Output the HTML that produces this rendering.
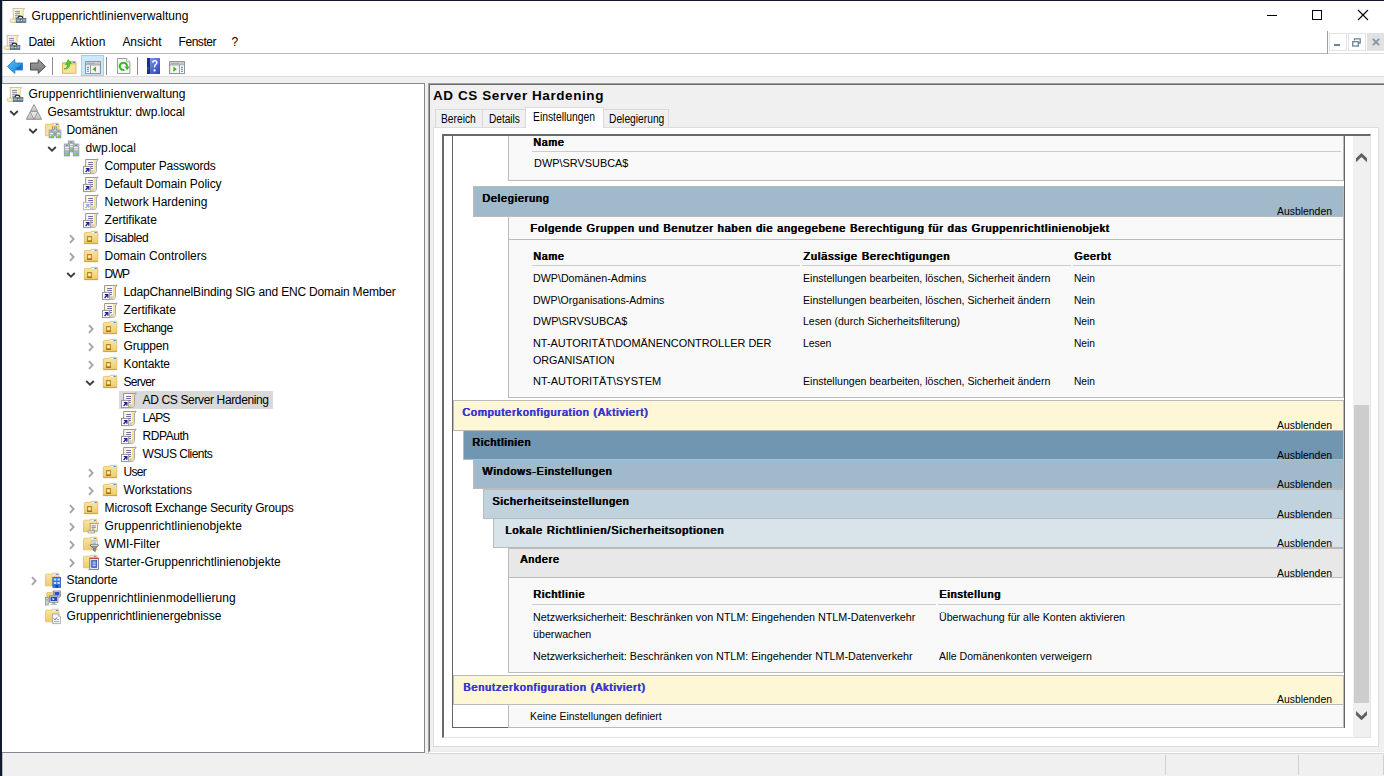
<!DOCTYPE html>
<html lang="de"><head><meta charset="utf-8"><title>Gruppenrichtlinienverwaltung</title>
<style>
html,body{margin:0;padding:0;}
body{width:1384px;height:776px;overflow:hidden;position:relative;background:#f0f0f0;font-family:"Liberation Sans", sans-serif;color:#000;}
div,span{position:absolute;white-space:pre;}
span{display:block;}
svg{display:block;overflow:visible;}
</style></head><body>
<div style="left:0px;top:0px;width:1384px;height:776px;background:#f0f0f0;"></div>
<div style="left:0px;top:0px;width:1384px;height:31px;background:#ffffff;"></div>
<div style="left:0px;top:31px;width:1384px;height:22px;background:#ffffff;"></div>
<div style="left:0px;top:53px;width:1328px;height:1px;background:#b9b9b9;"></div>
<div style="left:1328px;top:53px;width:56px;height:1px;background:#dcdcdc;"></div>
<div style="left:0px;top:54px;width:1384px;height:22px;background:#ffffff;"></div>
<div style="left:0px;top:76px;width:1384px;height:1px;background:#dedede;"></div>
<div style="left:0px;top:0px;width:1384px;height:1px;background:#101c2e;"></div>
<div style="left:0px;top:0px;width:2px;height:776px;background:#0f1a2c;"></div>
<div style="left:2px;top:0px;width:1px;height:776px;background:#54606e;opacity:.35;"></div>
<div style="left:10px;top:6.7px;line-height:0"><svg width="16" height="16" viewBox="0 0 16 16">
<path d="M2.700 1.500H12.600C13.600 1.500 14 1.100 14.400 1.100 14.500 2 13.800 3 13 3.100V12.200H3.300V2.800C3.300 2 3 1.600 2.700 1.500Z" fill="#fdf6d4" stroke="#b5ad92" stroke-width=".7"/>
<path d="M11.400 2.200h1.600v9.600h-1.600z" fill="#f3e4a6" opacity=".7"/>
<path d="M5.100 4.400H10M5.100 6.300H10M5.100 8.300H10M5.100 10.200H8" stroke="#8482b8" stroke-width="1"/>
<path d="M1 12.200H7V15.400H1.400C.6 15.400 .1 14.700 .1 13.800S.6 12.200 1 12.200Z" fill="#f8ecb8" stroke="#c4b57e" stroke-width=".7"/>
<path d="M1 13.300h5" stroke="#fffbe6" stroke-width=".9"/>
<path d="M8.300 11.500V10.300C8.300 9.500 9 9.200 10.400 9.200S12.600 9.500 12.600 10.300V11.500" fill="none" stroke="#1e2226" stroke-width="1.200"/>
<rect x="6.200" y="11.300" width="9.700" height="4.200" fill="#647f98" stroke="#4a5f73" stroke-width=".7"/>
<rect x="6.600" y="11.700" width="8.900" height="1" fill="#86a0b8"/>
<rect x="6.600" y="13.300" width="8.900" height=".8" fill="#b9c8d5"/>
<rect x="10.600" y="12.500" width="1.500" height="2" fill="#f4f6f8" stroke="#222" stroke-width=".4"/>
</svg></div>
<span style="left:31.50px;top:6.64px;font-size:12px;line-height:18px;letter-spacing:0.056px;">Gruppenrichtlinienverwaltung</span>
<div style="left:1267px;top:15px;width:10px;height:1px;background:#000;"></div>
<div style="left:1312px;top:10px;width:10px;height:10px;border:1px solid #000;box-sizing:border-box;"></div>
<div style="left:1358px;top:10px;line-height:0"><svg width="10" height="10" viewBox="0 0 10 10"><path d="M0 0L10 10M10 0L0 10" stroke="#000" stroke-width="1.100"/></svg></div>
<div style="left:3.7px;top:34px;line-height:0"><svg width="16" height="16" viewBox="0 0 16 16">
<path d="M2.700 1.500H12.600C13.600 1.500 14 1.100 14.400 1.100 14.500 2 13.800 3 13 3.100V12.200H3.300V2.800C3.300 2 3 1.600 2.700 1.500Z" fill="#fdf6d4" stroke="#b5ad92" stroke-width=".7"/>
<path d="M11.400 2.200h1.600v9.600h-1.600z" fill="#f3e4a6" opacity=".7"/>
<path d="M5.100 4.400H10M5.100 6.300H10M5.100 8.300H10M5.100 10.200H8" stroke="#8482b8" stroke-width="1"/>
<path d="M1 12.200H7V15.400H1.400C.6 15.400 .1 14.700 .1 13.800S.6 12.200 1 12.200Z" fill="#f8ecb8" stroke="#c4b57e" stroke-width=".7"/>
<path d="M1 13.300h5" stroke="#fffbe6" stroke-width=".9"/>
<path d="M8.300 11.500V10.300C8.300 9.500 9 9.200 10.400 9.200S12.600 9.500 12.600 10.300V11.500" fill="none" stroke="#1e2226" stroke-width="1.200"/>
<rect x="6.200" y="11.300" width="9.700" height="4.200" fill="#647f98" stroke="#4a5f73" stroke-width=".7"/>
<rect x="6.600" y="11.700" width="8.900" height="1" fill="#86a0b8"/>
<rect x="6.600" y="13.300" width="8.900" height=".8" fill="#b9c8d5"/>
<rect x="10.600" y="12.500" width="1.500" height="2" fill="#f4f6f8" stroke="#222" stroke-width=".4"/>
</svg></div>
<span style="left:28.60px;top:32.84px;font-size:12px;line-height:18px;letter-spacing:-0.403px;">Datei</span>
<span style="left:71.10px;top:32.84px;font-size:12px;line-height:18px;letter-spacing:0.173px;">Aktion</span>
<span style="left:122.40px;top:32.84px;font-size:12px;line-height:18px;letter-spacing:-0.023px;">Ansicht</span>
<span style="left:178.60px;top:32.84px;font-size:12px;line-height:18px;letter-spacing:-0.470px;">Fenster</span>
<span style="left:231.60px;top:32.84px;font-size:12px;line-height:18px;letter-spacing:-1.688px;">?</span>
<div style="left:1327px;top:31px;width:1px;height:23px;background:#a0a0a0;"></div>
<div style="left:1329px;top:33px;width:18px;height:18px;background:#fff;border:1px solid #e3e3e3;box-sizing:border-box;"></div>
<div style="left:1334px;top:44px;width:6px;height:2px;background:#6d8397;"></div>
<div style="left:1348px;top:33px;width:18px;height:18px;background:#fff;border:1px solid #e3e3e3;box-sizing:border-box;"></div>
<div style="left:1352px;top:38px;line-height:0"><svg width="9" height="9" viewBox="0 0 9 9"><path d="M2.500 2.500V.800H8.200V5H6.500" fill="none" stroke="#6d8397" stroke-width="1.300"/><rect x=".7" y="3.700" width="5.600" height="4.300" fill="none" stroke="#6d8397" stroke-width="1.300"/></svg></div>
<div style="left:1367px;top:33px;width:17px;height:18px;background:#e1e1e1;"></div>
<div style="left:1372px;top:38px;line-height:0"><svg width="8" height="8" viewBox="0 0 8 8"><path d="M.800 .800L7.200 7.200M7.200 .800L.800 7.200" stroke="#7f97ab" stroke-width="1.800"/></svg></div>
<div style="left:7px;top:59px;line-height:0"><svg width="16" height="15" viewBox="0 0 16 15">
<defs><linearGradient id="bg1" x1="0" y1="0" x2="1" y2="1"><stop offset="0" stop-color="#5cc2f7"/><stop offset=".55" stop-color="#2d9dea"/><stop offset="1" stop-color="#1b6fcc"/></linearGradient></defs>
<path d="M.5 7.500L7.800 .6V4H15.500V11H7.800V14.400Z" fill="url(#bg1)" stroke="#2a7fd8" stroke-width=".9" stroke-linejoin="round"/>
<path d="M8.600 9.600L14.600 5.600V10.200H8.600Z" fill="#1a60c4" opacity=".8"/>
</svg></div>
<div style="left:30px;top:59px;line-height:0"><svg width="16" height="15" viewBox="0 0 16 15">
<defs><linearGradient id="fg1" x1="0" y1="0" x2="0" y2="1"><stop offset="0" stop-color="#a0a0a0"/><stop offset="1" stop-color="#787878"/></linearGradient></defs>
<path d="M15.500 7.500L8.200 .6V4H.5V11H8.200V14.400Z" fill="url(#fg1)" stroke="#4e4e4e" stroke-width="1" stroke-linejoin="round"/>
</svg></div>
<div style="left:52px;top:57px;width:1px;height:18px;background:#8e8e8e;"></div>
<div style="left:61.5px;top:59px;line-height:0"><svg width="15" height="15" viewBox="0 0 15 15">
<path d="M.5 3.800H6L7 2.400H13.200C13.700 2.400 14 2.700 14 3.200V14.300H.5Z" fill="#eccb6c" stroke="#d0a748" stroke-width=".8"/>
<path d="M1 5.400H13.500V13.800H1Z" fill="#f7e098"/>
<rect x="10.800" y="3.100" width="2.200" height="1" fill="#3f86e8"/>
<path d="M2 10C4.400 9.600 5.600 7.800 5.400 5.400L3.600 5.600 6.200 .600 9.400 4.600 7.600 4.800C8 8.200 5.800 10.400 2 10Z" fill="#43cf2c" stroke="#2a9a1c" stroke-width=".5"/>
</svg></div>
<div style="left:81px;top:55px;width:23px;height:21px;background:#cce8ff;border:1px solid #99d1ff;box-sizing:border-box;"></div>
<div style="left:85px;top:60.5px;line-height:0"><svg width="16" height="13.2" viewBox="0 0 16 13.200">
<rect x=".6" y=".6" width="14.800" height="12" fill="#f3f3f3" stroke="#8a8a8a" stroke-width="1"/>
<rect x="1.100" y="1.100" width="13.800" height="2.300" fill="#e4e4e4"/>
<path d="M1.600 2.200H10.600" stroke="#8a8a8a" stroke-width=".9"/>
<rect x="11.600" y="1.500" width="1" height="1.200" fill="#8a8a8a"/><rect x="13.400" y="1.500" width="1" height="1.200" fill="#8a8a8a"/>
<path d="M.6 3.900H15.400" stroke="#8a8a8a" stroke-width=".9"/><path d="M5.400 3.900V12.600" stroke="#8a8a8a" stroke-width=".9"/>
<rect x="1.100" y="4.400" width="3.800" height="7.700" fill="#fff"/>
<path d="M2 6.200H4M2 8.200H4M2 10.200H4" stroke="#2b7fd0" stroke-width="1"/>
<path d="M11 5.600V10.800L7.600 8.200Z" fill="#35b51f"/></svg></div>
<div style="left:106px;top:57px;width:1px;height:18px;background:#8e8e8e;"></div>
<div style="left:117px;top:58px;line-height:0"><svg width="13.4" height="16" viewBox="0 0 13.400 16">
<path d="M.5 .5H9.600L12.900 3.800V15.500H.5Z" fill="#f7f7f7" stroke="#8f8f8f" stroke-width=".9"/>
<path d="M9.600 .5V3.800H12.900" fill="#fff" stroke="#8f8f8f" stroke-width=".7"/>
<path d="M7.400 11.900A3.700 3.700 0 1 1 10.100 8.600" fill="none" stroke="#3db52a" stroke-width="2"/>
<path d="M7.400 8.400H12.800L10.100 12.200Z" fill="#3db52a"/>
</svg></div>
<div style="left:137px;top:57px;width:1px;height:18px;background:#8e8e8e;"></div>
<div style="left:147px;top:58px;line-height:0"><svg width="13" height="16" viewBox="0 0 13 16">
<defs><linearGradient id="hg" x1="0" y1="0" x2="1" y2="1"><stop offset="0" stop-color="#8aa2ea"/><stop offset=".5" stop-color="#5670d8"/><stop offset="1" stop-color="#2f41b0"/></linearGradient></defs>
<rect x="0" y="0" width="13" height="16" fill="url(#hg)"/>
<rect x="0" y="0" width="3" height="16" fill="#1d2b9a"/>
<rect x=".6" y="9" width=".8" height="3" fill="#2aa82a"/>
<path d="M5 4.600C5 3 6.200 2 7.800 2S10.600 3 10.600 4.500C10.600 5.800 9.800 6.400 9.100 7 8.500 7.500 8.300 8 8.300 8.800V9.400H6.900V8.600C6.900 7.600 7.300 6.900 8 6.300 8.600 5.800 9.100 5.300 9.100 4.600 9.100 3.900 8.600 3.400 7.800 3.400S6.400 3.900 6.400 4.700Z" fill="#fff"/>
<circle cx="7.600" cy="12.400" r="1.100" fill="#fff"/>
</svg></div>
<div style="left:169px;top:60.5px;line-height:0"><svg width="16" height="13.2" viewBox="0 0 16 13.200">
<rect x=".6" y=".6" width="14.800" height="12" fill="#f3f3f3" stroke="#8a8a8a" stroke-width="1"/>
<rect x="1.100" y="1.100" width="13.800" height="2.300" fill="#e4e4e4"/>
<path d="M1.600 2.200H10.600" stroke="#8a8a8a" stroke-width=".9"/>
<rect x="11.600" y="1.500" width="1" height="1.200" fill="#8a8a8a"/><rect x="13.400" y="1.500" width="1" height="1.200" fill="#8a8a8a"/>
<path d="M.6 3.900H15.400" stroke="#8a8a8a" stroke-width=".9"/><path d="M10.600 3.900V12.600" stroke="#8a8a8a" stroke-width=".9"/>
<rect x="11.100" y="4.400" width="3.800" height="7.700" fill="#fff"/>
<path d="M12 6.200H14M12 8.200H14M12 10.200H14" stroke="#2b7fd0" stroke-width="1"/>
<path d="M4.400 5.600V10.800L7.800 8.200Z" fill="#35b51f"/></svg></div>
<div style="left:2px;top:83px;width:423px;height:670px;background:#ffffff;border:1px solid #828790;border-left:none;box-sizing:border-box;"></div>
<div style="left:7px;top:86px;line-height:0"><svg width="16" height="16" viewBox="0 0 16 16">
<path d="M2.700 1.500H12.600C13.600 1.500 14 1.100 14.400 1.100 14.500 2 13.800 3 13 3.100V12.200H3.300V2.800C3.300 2 3 1.600 2.700 1.500Z" fill="#fdf6d4" stroke="#b5ad92" stroke-width=".7"/>
<path d="M11.400 2.200h1.600v9.600h-1.600z" fill="#f3e4a6" opacity=".7"/>
<path d="M5.100 4.400H10M5.100 6.300H10M5.100 8.300H10M5.100 10.200H8" stroke="#8482b8" stroke-width="1"/>
<path d="M1 12.200H7V15.400H1.400C.6 15.400 .1 14.700 .1 13.800S.6 12.200 1 12.200Z" fill="#f8ecb8" stroke="#c4b57e" stroke-width=".7"/>
<path d="M1 13.300h5" stroke="#fffbe6" stroke-width=".9"/>
<path d="M8.300 11.500V10.300C8.300 9.500 9 9.200 10.400 9.200S12.600 9.500 12.600 10.300V11.500" fill="none" stroke="#1e2226" stroke-width="1.200"/>
<rect x="6.200" y="11.300" width="9.700" height="4.200" fill="#647f98" stroke="#4a5f73" stroke-width=".7"/>
<rect x="6.600" y="11.700" width="8.900" height="1" fill="#86a0b8"/>
<rect x="6.600" y="13.300" width="8.900" height=".8" fill="#b9c8d5"/>
<rect x="10.600" y="12.500" width="1.500" height="2" fill="#f4f6f8" stroke="#222" stroke-width=".4"/>
</svg></div>
<span style="left:28.60px;top:85.14px;font-size:12px;line-height:18px;letter-spacing:0.056px;">Gruppenrichtlinienverwaltung</span>
<div style="left:9.3px;top:109.6px;line-height:0"><svg width="10" height="7" viewBox="0 0 10 7"><path d="M1.200 1L5 4.600 8.800 1" fill="none" stroke="#3f3f3f" stroke-width="1.900"/></svg></div>
<div style="left:26px;top:104px;line-height:0"><svg width="16" height="16" viewBox="0 0 16 16">
<defs><linearGradient id="fo" x1="0" y1="0" x2="0" y2="1"><stop offset="0" stop-color="#e8e8e8"/><stop offset="1" stop-color="#bdbdbd"/></linearGradient></defs>
<path d="M8 .5L15.600 15.300H.4Z" fill="#e4e4e4"/>
<path d="M8 .5L11.700 7.400H4.300Z" fill="url(#fo)" stroke="#8c8c8c" stroke-width=".9" stroke-linejoin="round"/>
<path d="M4.200 7.900L8 15.300H.4Z" fill="url(#fo)" stroke="#8c8c8c" stroke-width=".9" stroke-linejoin="round"/>
<path d="M11.800 7.900L15.600 15.300H8Z" fill="url(#fo)" stroke="#8c8c8c" stroke-width=".9" stroke-linejoin="round"/>
</svg></div>
<span style="left:47.60px;top:103.14px;font-size:12px;line-height:18px;letter-spacing:-0.053px;">Gesamtstruktur: dwp.local</span>
<div style="left:28.3px;top:127.6px;line-height:0"><svg width="10" height="7" viewBox="0 0 10 7"><path d="M1.200 1L5 4.600 8.800 1" fill="none" stroke="#3f3f3f" stroke-width="1.900"/></svg></div>
<div style="left:45px;top:122px;line-height:0"><svg width="16" height="16" viewBox="0 0 16 16">
<path d="M.5 3.200C.5 2.500 1 2.200 1.600 2.200H6.600L7.400 1.200H13.200C13.700 1.200 13.900 1.500 13.900 2V13.800H.5Z" fill="#f2d57f" stroke="#dcb85a" stroke-width=".7"/>
<path d="M1.100 3.400H6.800V13.300H1.100Z" fill="#f9e5a4" opacity=".8"/>
<rect x="8.600" y="1.900" width="2.200" height="1" fill="#fffdf0"/><rect x="10.800" y="1.900" width="2" height="1" fill="#3f86e8"/>
<rect x="7.5" y="5" width="4.2" height="8" fill="#a9b4bd" stroke="#76838e" stroke-width=".6"/>
<rect x="8.0" y="5.4" width="3.2" height="1.500" fill="#e9edf0"/>
<rect x="8.8" y="5.7" width="1.6" height=".8" fill="#2d3c46"/>
<rect x="8.2" y="7.9" width="2.8000000000000003" height="1.300" fill="#f2f5f7"/>
<rect x="8.2" y="10" width="2.8000000000000003" height="1.200" fill="#dfe5e9"/>
<rect x="8.799999999999999" y="10.3" width="2" height="1.900" fill="#4be022"/><rect x="4.1" y="8" width="4.9" height="7.9" fill="#a9b4bd" stroke="#76838e" stroke-width=".6"/>
<rect x="4.6" y="8.4" width="3.9000000000000004" height="1.500" fill="#e9edf0"/>
<rect x="5.3999999999999995" y="8.7" width="2.3000000000000003" height=".8" fill="#2d3c46"/>
<rect x="4.8" y="10.9" width="3.5000000000000004" height="1.300" fill="#f2f5f7"/>
<rect x="4.8" y="13" width="3.5000000000000004" height="1.200" fill="#dfe5e9"/>
<rect x="6.1" y="13.2" width="2" height="1.900" fill="#4be022"/><rect x="11.1" y="8" width="4.8" height="7.9" fill="#a9b4bd" stroke="#76838e" stroke-width=".6"/>
<rect x="11.6" y="8.4" width="3.8" height="1.500" fill="#e9edf0"/>
<rect x="12.4" y="8.7" width="2.1999999999999997" height=".8" fill="#2d3c46"/>
<rect x="11.799999999999999" y="10.9" width="3.4" height="1.300" fill="#f2f5f7"/>
<rect x="11.799999999999999" y="13" width="3.4" height="1.200" fill="#dfe5e9"/>
<rect x="12.999999999999998" y="13.2" width="2" height="1.900" fill="#4be022"/></svg></div>
<span style="left:66.60px;top:121.14px;font-size:12px;line-height:18px;letter-spacing:-0.147px;">Domänen</span>
<div style="left:47.3px;top:145.6px;line-height:0"><svg width="10" height="7" viewBox="0 0 10 7"><path d="M1.200 1L5 4.600 8.800 1" fill="none" stroke="#3f3f3f" stroke-width="1.900"/></svg></div>
<div style="left:64px;top:140px;line-height:0"><svg width="16" height="16" viewBox="0 0 16 16"><rect x="4.2" y="1" width="5.8" height="11" fill="#a9b4bd" stroke="#76838e" stroke-width=".6"/>
<rect x="4.7" y="1.4" width="4.8" height="1.500" fill="#e9edf0"/>
<rect x="5.5" y="1.7" width="3.1999999999999997" height=".8" fill="#2d3c46"/>
<rect x="4.9" y="3.9" width="4.4" height="1.300" fill="#f2f5f7"/>
<rect x="4.9" y="6" width="4.4" height="1.200" fill="#dfe5e9"/>
<rect x="7.1" y="9.3" width="2" height="1.900" fill="#4be022"/><rect x="0.2" y="4" width="5.5" height="12" fill="#a9b4bd" stroke="#76838e" stroke-width=".6"/>
<rect x="0.7" y="4.4" width="4.5" height="1.500" fill="#e9edf0"/>
<rect x="1.5" y="4.7" width="2.9" height=".8" fill="#2d3c46"/>
<rect x="0.8999999999999999" y="6.9" width="4.1" height="1.300" fill="#f2f5f7"/>
<rect x="0.8999999999999999" y="9" width="4.1" height="1.200" fill="#dfe5e9"/>
<rect x="2.8000000000000003" y="13.3" width="2" height="1.900" fill="#4be022"/><rect x="9.2" y="4" width="5.7" height="12" fill="#a9b4bd" stroke="#76838e" stroke-width=".6"/>
<rect x="9.7" y="4.4" width="4.7" height="1.500" fill="#e9edf0"/>
<rect x="10.5" y="4.7" width="3.1" height=".8" fill="#2d3c46"/>
<rect x="9.899999999999999" y="6.9" width="4.300000000000001" height="1.300" fill="#f2f5f7"/>
<rect x="9.899999999999999" y="9" width="4.300000000000001" height="1.200" fill="#dfe5e9"/>
<rect x="11.999999999999998" y="13.3" width="2" height="1.900" fill="#4be022"/></svg></div>
<span style="left:85.60px;top:139.14px;font-size:12px;line-height:18px;letter-spacing:0.041px;">dwp.local</span>
<div style="left:83px;top:158px;line-height:0"><svg width="16" height="16" viewBox="0 0 16 16">
<path d="M2.600 1.500H13C14 1.500 14.500 1 15 .9 15 2 14.300 3 13.300 3.100V12.500C13.300 14.200 12.600 15.200 11.500 15.200H6.500V13.500L2.600 13.400Z" fill="#fdf8df" stroke="#8c8c8c" stroke-width=".9"/>
<path d="M11 2.300H12.800V13.500L12 15H10.500C11 14.500 11 13.500 11 13Z" fill="#f2e09c"/>
<path d="M5.200 4.500H10M5.200 6.500H10M8 8.500H10M8 10.500H10" stroke="#6f6db0" stroke-width="1.100"/>
<path d="M8.400 12.300H12.200V14.800H8.400Z" fill="#f6ecc0"/>
<path d="M9.500 12.200V14.900M11 12.200V14.900" stroke="#b9b39a" stroke-width=".7"/>
<rect x=".5" y="8.400" width="7.200" height="7.200" fill="#ffffff" stroke="#939393" stroke-width="1"/>
<path d="M2.800 10H6.500V13.700H5.200V12.300L3.100 14.400 2.100 13.400 4.200 11.300H2.800Z" fill="#22228c"/>
</svg></div>
<span style="left:104.60px;top:157.14px;font-size:12px;line-height:18px;letter-spacing:-0.207px;">Computer Passwords</span>
<div style="left:83px;top:176px;line-height:0"><svg width="16" height="16" viewBox="0 0 16 16">
<path d="M2.600 1.500H13C14 1.500 14.500 1 15 .9 15 2 14.300 3 13.300 3.100V12.500C13.300 14.200 12.600 15.200 11.500 15.200H6.500V13.500L2.600 13.400Z" fill="#fdf8df" stroke="#8c8c8c" stroke-width=".9"/>
<path d="M11 2.300H12.800V13.500L12 15H10.500C11 14.500 11 13.500 11 13Z" fill="#f2e09c"/>
<path d="M5.200 4.500H10M5.200 6.500H10M8 8.500H10M8 10.500H10" stroke="#6f6db0" stroke-width="1.100"/>
<path d="M8.400 12.300H12.200V14.800H8.400Z" fill="#f6ecc0"/>
<path d="M9.500 12.200V14.900M11 12.200V14.900" stroke="#b9b39a" stroke-width=".7"/>
<rect x=".5" y="8.400" width="7.200" height="7.200" fill="#ffffff" stroke="#939393" stroke-width="1"/>
<path d="M2.800 10H6.500V13.700H5.200V12.300L3.100 14.400 2.100 13.400 4.200 11.300H2.800Z" fill="#22228c"/>
</svg></div>
<span style="left:104.60px;top:175.14px;font-size:12px;line-height:18px;letter-spacing:-0.051px;">Default Domain Policy</span>
<div style="left:83px;top:194px;line-height:0"><svg width="16" height="16" viewBox="0 0 16 16">
<path d="M2.600 1.500H13C14 1.500 14.500 1 15 .9 15 2 14.300 3 13.300 3.100V12.500C13.300 14.200 12.600 15.200 11.500 15.200H6.500V13.500L2.600 13.400Z" fill="#fdf8df" stroke="#8c8c8c" stroke-width=".9"/>
<path d="M11 2.300H12.800V13.500L12 15H10.500C11 14.500 11 13.500 11 13Z" fill="#f2e09c"/>
<path d="M5.200 4.500H10M5.200 6.500H10M8 8.500H10M8 10.500H10" stroke="#6f6db0" stroke-width="1.100"/>
<path d="M8.400 12.300H12.200V14.800H8.400Z" fill="#f6ecc0"/>
<path d="M9.500 12.200V14.900M11 12.200V14.900" stroke="#b9b39a" stroke-width=".7"/>
<rect x=".5" y="8.400" width="7.200" height="7.200" fill="#ffffff" stroke="#b8b8b8" stroke-width="1"/>
<path d="M2.800 10H6.500V13.700H5.200V12.300L3.100 14.400 2.100 13.400 4.200 11.300H2.800Z" fill="#a5a3d8"/>
</svg></div>
<span style="left:104.60px;top:193.14px;font-size:12px;line-height:18px;letter-spacing:0.005px;">Network Hardening</span>
<div style="left:83px;top:212px;line-height:0"><svg width="16" height="16" viewBox="0 0 16 16">
<path d="M2.600 1.500H13C14 1.500 14.500 1 15 .9 15 2 14.300 3 13.300 3.100V12.500C13.300 14.200 12.600 15.200 11.500 15.200H6.500V13.500L2.600 13.400Z" fill="#fdf8df" stroke="#8c8c8c" stroke-width=".9"/>
<path d="M11 2.300H12.800V13.500L12 15H10.500C11 14.500 11 13.500 11 13Z" fill="#f2e09c"/>
<path d="M5.200 4.500H10M5.200 6.500H10M8 8.500H10M8 10.500H10" stroke="#6f6db0" stroke-width="1.100"/>
<path d="M8.400 12.300H12.200V14.800H8.400Z" fill="#f6ecc0"/>
<path d="M9.500 12.200V14.900M11 12.200V14.900" stroke="#b9b39a" stroke-width=".7"/>
<rect x=".5" y="8.400" width="7.200" height="7.200" fill="#ffffff" stroke="#939393" stroke-width="1"/>
<path d="M2.800 10H6.500V13.700H5.200V12.300L3.100 14.400 2.100 13.400 4.200 11.300H2.800Z" fill="#22228c"/>
</svg></div>
<span style="left:104.60px;top:211.14px;font-size:12px;line-height:18px;letter-spacing:-0.044px;">Zertifikate</span>
<div style="left:68.5px;top:234.1px;line-height:0"><svg width="7" height="10" viewBox="0 0 7 10"><path d="M1 1.200L4.600 5 1 8.800" fill="none" stroke="#a6a6a6" stroke-width="1.900"/></svg></div>
<div style="left:83px;top:230px;line-height:0"><svg width="16" height="16" viewBox="0 0 16 16"><g transform="translate(0 0)">
<defs><linearGradient id="fd" x1="0" y1="0" x2="0" y2="1"><stop offset="0" stop-color="#f9e6a6"/><stop offset="1" stop-color="#eecb68"/></linearGradient></defs>
<path d="M1.300 3.500C1.300 2.800 1.800 2.400 2.400 2.400H7.300L8.100 1.300H14.100C14.600 1.300 14.800 1.600 14.800 2.100V13.700H1.300Z" fill="url(#fd)" stroke="#dcb14e" stroke-width=".7"/>
<path d="M1.300 13.400H14.800" stroke="#c99a2e" stroke-width=".8"/>
<rect x="9.300" y="2" width="2.300" height="1" fill="#fffdf2"/><rect x="11.600" y="2" width="2.100" height="1" fill="#3f86e8"/>
</g>
<rect x="4.100" y="6.100" width="4.800" height="5.900" fill="#b27f12"/>
<rect x="4.900" y="7.200" width="3.200" height="3.200" fill="#efd894"/>
<rect x="5.700" y="7.800" width="1.700" height="1.800" fill="#fff8dc"/>
<rect x="4.100" y="10.800" width="4.800" height="1.200" fill="#a87408"/>
</svg></div>
<span style="left:104.60px;top:229.14px;font-size:12px;line-height:18px;letter-spacing:-0.363px;">Disabled</span>
<div style="left:68.5px;top:252.1px;line-height:0"><svg width="7" height="10" viewBox="0 0 7 10"><path d="M1 1.200L4.600 5 1 8.800" fill="none" stroke="#a6a6a6" stroke-width="1.900"/></svg></div>
<div style="left:83px;top:248px;line-height:0"><svg width="16" height="16" viewBox="0 0 16 16"><g transform="translate(0 0)">
<defs><linearGradient id="fd" x1="0" y1="0" x2="0" y2="1"><stop offset="0" stop-color="#f9e6a6"/><stop offset="1" stop-color="#eecb68"/></linearGradient></defs>
<path d="M1.300 3.500C1.300 2.800 1.800 2.400 2.400 2.400H7.300L8.100 1.300H14.100C14.600 1.300 14.800 1.600 14.800 2.100V13.700H1.300Z" fill="url(#fd)" stroke="#dcb14e" stroke-width=".7"/>
<path d="M1.300 13.400H14.800" stroke="#c99a2e" stroke-width=".8"/>
<rect x="9.300" y="2" width="2.300" height="1" fill="#fffdf2"/><rect x="11.600" y="2" width="2.100" height="1" fill="#3f86e8"/>
</g>
<rect x="4.100" y="6.100" width="4.800" height="5.900" fill="#b27f12"/>
<rect x="4.900" y="7.200" width="3.200" height="3.200" fill="#efd894"/>
<rect x="5.700" y="7.800" width="1.700" height="1.800" fill="#fff8dc"/>
<rect x="4.100" y="10.800" width="4.800" height="1.200" fill="#a87408"/>
</svg></div>
<span style="left:104.60px;top:247.14px;font-size:12px;line-height:18px;letter-spacing:-0.039px;">Domain Controllers</span>
<div style="left:66.3px;top:271.6px;line-height:0"><svg width="10" height="7" viewBox="0 0 10 7"><path d="M1.200 1L5 4.600 8.800 1" fill="none" stroke="#3f3f3f" stroke-width="1.900"/></svg></div>
<div style="left:83px;top:266px;line-height:0"><svg width="16" height="16" viewBox="0 0 16 16"><g transform="translate(0 0)">
<defs><linearGradient id="fd" x1="0" y1="0" x2="0" y2="1"><stop offset="0" stop-color="#f9e6a6"/><stop offset="1" stop-color="#eecb68"/></linearGradient></defs>
<path d="M1.300 3.500C1.300 2.800 1.800 2.400 2.400 2.400H7.300L8.100 1.300H14.100C14.600 1.300 14.800 1.600 14.800 2.100V13.700H1.300Z" fill="url(#fd)" stroke="#dcb14e" stroke-width=".7"/>
<path d="M1.300 13.400H14.800" stroke="#c99a2e" stroke-width=".8"/>
<rect x="9.300" y="2" width="2.300" height="1" fill="#fffdf2"/><rect x="11.600" y="2" width="2.100" height="1" fill="#3f86e8"/>
</g>
<rect x="4.100" y="6.100" width="4.800" height="5.900" fill="#b27f12"/>
<rect x="4.900" y="7.200" width="3.200" height="3.200" fill="#efd894"/>
<rect x="5.700" y="7.800" width="1.700" height="1.800" fill="#fff8dc"/>
<rect x="4.100" y="10.800" width="4.800" height="1.200" fill="#a87408"/>
</svg></div>
<span style="left:104.60px;top:265.14px;font-size:12px;line-height:18px;letter-spacing:-1.233px;">DWP</span>
<div style="left:102px;top:284px;line-height:0"><svg width="16" height="16" viewBox="0 0 16 16">
<path d="M2.600 1.500H13C14 1.500 14.500 1 15 .9 15 2 14.300 3 13.300 3.100V12.500C13.300 14.200 12.600 15.200 11.500 15.200H6.500V13.500L2.600 13.400Z" fill="#fdf8df" stroke="#8c8c8c" stroke-width=".9"/>
<path d="M11 2.300H12.800V13.500L12 15H10.500C11 14.500 11 13.500 11 13Z" fill="#f2e09c"/>
<path d="M5.200 4.500H10M5.200 6.500H10M8 8.500H10M8 10.500H10" stroke="#6f6db0" stroke-width="1.100"/>
<path d="M8.400 12.300H12.200V14.800H8.400Z" fill="#f6ecc0"/>
<path d="M9.500 12.200V14.900M11 12.200V14.900" stroke="#b9b39a" stroke-width=".7"/>
<rect x=".5" y="8.400" width="7.200" height="7.200" fill="#ffffff" stroke="#939393" stroke-width="1"/>
<path d="M2.800 10H6.500V13.700H5.200V12.300L3.100 14.400 2.100 13.400 4.200 11.300H2.800Z" fill="#22228c"/>
</svg></div>
<span style="left:123.60px;top:283.14px;font-size:12px;line-height:18px;letter-spacing:-0.170px;">LdapChannelBinding SIG and ENC Domain Member</span>
<div style="left:102px;top:302px;line-height:0"><svg width="16" height="16" viewBox="0 0 16 16">
<path d="M2.600 1.500H13C14 1.500 14.500 1 15 .9 15 2 14.300 3 13.300 3.100V12.500C13.300 14.200 12.600 15.200 11.500 15.200H6.500V13.500L2.600 13.400Z" fill="#fdf8df" stroke="#8c8c8c" stroke-width=".9"/>
<path d="M11 2.300H12.800V13.500L12 15H10.500C11 14.500 11 13.500 11 13Z" fill="#f2e09c"/>
<path d="M5.200 4.500H10M5.200 6.500H10M8 8.500H10M8 10.500H10" stroke="#6f6db0" stroke-width="1.100"/>
<path d="M8.400 12.300H12.200V14.800H8.400Z" fill="#f6ecc0"/>
<path d="M9.500 12.200V14.900M11 12.200V14.900" stroke="#b9b39a" stroke-width=".7"/>
<rect x=".5" y="8.400" width="7.200" height="7.200" fill="#ffffff" stroke="#939393" stroke-width="1"/>
<path d="M2.800 10H6.500V13.700H5.200V12.300L3.100 14.400 2.100 13.400 4.200 11.300H2.800Z" fill="#22228c"/>
</svg></div>
<span style="left:123.60px;top:301.14px;font-size:12px;line-height:18px;letter-spacing:-0.044px;">Zertifikate</span>
<div style="left:87.5px;top:324.1px;line-height:0"><svg width="7" height="10" viewBox="0 0 7 10"><path d="M1 1.200L4.600 5 1 8.800" fill="none" stroke="#a6a6a6" stroke-width="1.900"/></svg></div>
<div style="left:102px;top:320px;line-height:0"><svg width="16" height="16" viewBox="0 0 16 16"><g transform="translate(0 0)">
<defs><linearGradient id="fd" x1="0" y1="0" x2="0" y2="1"><stop offset="0" stop-color="#f9e6a6"/><stop offset="1" stop-color="#eecb68"/></linearGradient></defs>
<path d="M1.300 3.500C1.300 2.800 1.800 2.400 2.400 2.400H7.300L8.100 1.300H14.100C14.600 1.300 14.800 1.600 14.800 2.100V13.700H1.300Z" fill="url(#fd)" stroke="#dcb14e" stroke-width=".7"/>
<path d="M1.300 13.400H14.800" stroke="#c99a2e" stroke-width=".8"/>
<rect x="9.300" y="2" width="2.300" height="1" fill="#fffdf2"/><rect x="11.600" y="2" width="2.100" height="1" fill="#3f86e8"/>
</g>
<rect x="4.100" y="6.100" width="4.800" height="5.900" fill="#b27f12"/>
<rect x="4.900" y="7.200" width="3.200" height="3.200" fill="#efd894"/>
<rect x="5.700" y="7.800" width="1.700" height="1.800" fill="#fff8dc"/>
<rect x="4.100" y="10.800" width="4.800" height="1.200" fill="#a87408"/>
</svg></div>
<span style="left:123.60px;top:319.14px;font-size:12px;line-height:18px;letter-spacing:-0.547px;">Exchange</span>
<div style="left:87.5px;top:342.1px;line-height:0"><svg width="7" height="10" viewBox="0 0 7 10"><path d="M1 1.200L4.600 5 1 8.800" fill="none" stroke="#a6a6a6" stroke-width="1.900"/></svg></div>
<div style="left:102px;top:338px;line-height:0"><svg width="16" height="16" viewBox="0 0 16 16"><g transform="translate(0 0)">
<defs><linearGradient id="fd" x1="0" y1="0" x2="0" y2="1"><stop offset="0" stop-color="#f9e6a6"/><stop offset="1" stop-color="#eecb68"/></linearGradient></defs>
<path d="M1.300 3.500C1.300 2.800 1.800 2.400 2.400 2.400H7.300L8.100 1.300H14.100C14.600 1.300 14.800 1.600 14.800 2.100V13.700H1.300Z" fill="url(#fd)" stroke="#dcb14e" stroke-width=".7"/>
<path d="M1.300 13.400H14.800" stroke="#c99a2e" stroke-width=".8"/>
<rect x="9.300" y="2" width="2.300" height="1" fill="#fffdf2"/><rect x="11.600" y="2" width="2.100" height="1" fill="#3f86e8"/>
</g>
<rect x="4.100" y="6.100" width="4.800" height="5.900" fill="#b27f12"/>
<rect x="4.900" y="7.200" width="3.200" height="3.200" fill="#efd894"/>
<rect x="5.700" y="7.800" width="1.700" height="1.800" fill="#fff8dc"/>
<rect x="4.100" y="10.800" width="4.800" height="1.200" fill="#a87408"/>
</svg></div>
<span style="left:123.60px;top:337.14px;font-size:12px;line-height:18px;letter-spacing:-0.243px;">Gruppen</span>
<div style="left:87.5px;top:360.1px;line-height:0"><svg width="7" height="10" viewBox="0 0 7 10"><path d="M1 1.200L4.600 5 1 8.800" fill="none" stroke="#a6a6a6" stroke-width="1.900"/></svg></div>
<div style="left:102px;top:356px;line-height:0"><svg width="16" height="16" viewBox="0 0 16 16"><g transform="translate(0 0)">
<defs><linearGradient id="fd" x1="0" y1="0" x2="0" y2="1"><stop offset="0" stop-color="#f9e6a6"/><stop offset="1" stop-color="#eecb68"/></linearGradient></defs>
<path d="M1.300 3.500C1.300 2.800 1.800 2.400 2.400 2.400H7.300L8.100 1.300H14.100C14.600 1.300 14.800 1.600 14.800 2.100V13.700H1.300Z" fill="url(#fd)" stroke="#dcb14e" stroke-width=".7"/>
<path d="M1.300 13.400H14.800" stroke="#c99a2e" stroke-width=".8"/>
<rect x="9.300" y="2" width="2.300" height="1" fill="#fffdf2"/><rect x="11.600" y="2" width="2.100" height="1" fill="#3f86e8"/>
</g>
<rect x="4.100" y="6.100" width="4.800" height="5.900" fill="#b27f12"/>
<rect x="4.900" y="7.200" width="3.200" height="3.200" fill="#efd894"/>
<rect x="5.700" y="7.800" width="1.700" height="1.800" fill="#fff8dc"/>
<rect x="4.100" y="10.800" width="4.800" height="1.200" fill="#a87408"/>
</svg></div>
<span style="left:123.60px;top:355.14px;font-size:12px;line-height:18px;letter-spacing:-0.134px;">Kontakte</span>
<div style="left:85.3px;top:379.6px;line-height:0"><svg width="10" height="7" viewBox="0 0 10 7"><path d="M1.200 1L5 4.600 8.800 1" fill="none" stroke="#3f3f3f" stroke-width="1.900"/></svg></div>
<div style="left:102px;top:374px;line-height:0"><svg width="16" height="16" viewBox="0 0 16 16"><g transform="translate(0 0)">
<defs><linearGradient id="fd" x1="0" y1="0" x2="0" y2="1"><stop offset="0" stop-color="#f9e6a6"/><stop offset="1" stop-color="#eecb68"/></linearGradient></defs>
<path d="M1.300 3.500C1.300 2.800 1.800 2.400 2.400 2.400H7.300L8.100 1.300H14.100C14.600 1.300 14.800 1.600 14.800 2.100V13.700H1.300Z" fill="url(#fd)" stroke="#dcb14e" stroke-width=".7"/>
<path d="M1.300 13.400H14.800" stroke="#c99a2e" stroke-width=".8"/>
<rect x="9.300" y="2" width="2.300" height="1" fill="#fffdf2"/><rect x="11.600" y="2" width="2.100" height="1" fill="#3f86e8"/>
</g>
<rect x="4.100" y="6.100" width="4.800" height="5.900" fill="#b27f12"/>
<rect x="4.900" y="7.200" width="3.200" height="3.200" fill="#efd894"/>
<rect x="5.700" y="7.800" width="1.700" height="1.800" fill="#fff8dc"/>
<rect x="4.100" y="10.800" width="4.800" height="1.200" fill="#a87408"/>
</svg></div>
<span style="left:123.60px;top:373.14px;font-size:12px;line-height:18px;letter-spacing:-0.724px;">Server</span>
<div style="left:119px;top:391px;width:154px;height:18px;background:#d9d9d9;"></div>
<div style="left:121px;top:392px;line-height:0"><svg width="16" height="16" viewBox="0 0 16 16">
<path d="M2.600 1.500H13C14 1.500 14.500 1 15 .9 15 2 14.300 3 13.300 3.100V12.500C13.300 14.200 12.600 15.200 11.500 15.200H6.500V13.500L2.600 13.400Z" fill="#fdf8df" stroke="#8c8c8c" stroke-width=".9"/>
<path d="M11 2.300H12.800V13.500L12 15H10.500C11 14.500 11 13.500 11 13Z" fill="#f2e09c"/>
<path d="M5.200 4.500H10M5.200 6.500H10M8 8.500H10M8 10.500H10" stroke="#6f6db0" stroke-width="1.100"/>
<path d="M8.400 12.300H12.200V14.800H8.400Z" fill="#f6ecc0"/>
<path d="M9.500 12.200V14.900M11 12.200V14.900" stroke="#b9b39a" stroke-width=".7"/>
<rect x=".5" y="8.400" width="7.200" height="7.200" fill="#ffffff" stroke="#939393" stroke-width="1"/>
<path d="M2.800 10H6.500V13.700H5.200V12.300L3.100 14.400 2.100 13.400 4.200 11.300H2.800Z" fill="#22228c"/>
</svg></div>
<span style="left:142.60px;top:391.14px;font-size:12px;line-height:18px;letter-spacing:-0.362px;">AD CS Server Hardening</span>
<div style="left:121px;top:410px;line-height:0"><svg width="16" height="16" viewBox="0 0 16 16">
<path d="M2.600 1.500H13C14 1.500 14.500 1 15 .9 15 2 14.300 3 13.300 3.100V12.500C13.300 14.200 12.600 15.200 11.500 15.200H6.500V13.500L2.600 13.400Z" fill="#fdf8df" stroke="#8c8c8c" stroke-width=".9"/>
<path d="M11 2.300H12.800V13.500L12 15H10.500C11 14.500 11 13.500 11 13Z" fill="#f2e09c"/>
<path d="M5.200 4.500H10M5.200 6.500H10M8 8.500H10M8 10.500H10" stroke="#6f6db0" stroke-width="1.100"/>
<path d="M8.400 12.300H12.200V14.800H8.400Z" fill="#f6ecc0"/>
<path d="M9.500 12.200V14.900M11 12.200V14.900" stroke="#b9b39a" stroke-width=".7"/>
<rect x=".5" y="8.400" width="7.200" height="7.200" fill="#ffffff" stroke="#939393" stroke-width="1"/>
<path d="M2.800 10H6.500V13.700H5.200V12.300L3.100 14.400 2.100 13.400 4.200 11.300H2.800Z" fill="#22228c"/>
</svg></div>
<span style="left:142.60px;top:409.14px;font-size:12px;line-height:18px;letter-spacing:-0.997px;">LAPS</span>
<div style="left:121px;top:428px;line-height:0"><svg width="16" height="16" viewBox="0 0 16 16">
<path d="M2.600 1.500H13C14 1.500 14.500 1 15 .9 15 2 14.300 3 13.300 3.100V12.500C13.300 14.200 12.600 15.200 11.500 15.200H6.500V13.500L2.600 13.400Z" fill="#fdf8df" stroke="#8c8c8c" stroke-width=".9"/>
<path d="M11 2.300H12.800V13.500L12 15H10.500C11 14.500 11 13.500 11 13Z" fill="#f2e09c"/>
<path d="M5.200 4.500H10M5.200 6.500H10M8 8.500H10M8 10.500H10" stroke="#6f6db0" stroke-width="1.100"/>
<path d="M8.400 12.300H12.200V14.800H8.400Z" fill="#f6ecc0"/>
<path d="M9.500 12.200V14.900M11 12.200V14.900" stroke="#b9b39a" stroke-width=".7"/>
<rect x=".5" y="8.400" width="7.200" height="7.200" fill="#ffffff" stroke="#939393" stroke-width="1"/>
<path d="M2.800 10H6.500V13.700H5.200V12.300L3.100 14.400 2.100 13.400 4.200 11.300H2.800Z" fill="#22228c"/>
</svg></div>
<span style="left:142.60px;top:427.14px;font-size:12px;line-height:18px;letter-spacing:-0.449px;">RDPAuth</span>
<div style="left:121px;top:446px;line-height:0"><svg width="16" height="16" viewBox="0 0 16 16">
<path d="M2.600 1.500H13C14 1.500 14.500 1 15 .9 15 2 14.300 3 13.300 3.100V12.500C13.300 14.200 12.600 15.200 11.500 15.200H6.500V13.500L2.600 13.400Z" fill="#fdf8df" stroke="#8c8c8c" stroke-width=".9"/>
<path d="M11 2.300H12.800V13.500L12 15H10.500C11 14.500 11 13.500 11 13Z" fill="#f2e09c"/>
<path d="M5.200 4.500H10M5.200 6.500H10M8 8.500H10M8 10.500H10" stroke="#6f6db0" stroke-width="1.100"/>
<path d="M8.400 12.300H12.200V14.800H8.400Z" fill="#f6ecc0"/>
<path d="M9.500 12.200V14.900M11 12.200V14.900" stroke="#b9b39a" stroke-width=".7"/>
<rect x=".5" y="8.400" width="7.200" height="7.200" fill="#ffffff" stroke="#939393" stroke-width="1"/>
<path d="M2.800 10H6.500V13.700H5.200V12.300L3.100 14.400 2.100 13.400 4.200 11.300H2.800Z" fill="#22228c"/>
</svg></div>
<span style="left:142.60px;top:445.14px;font-size:12px;line-height:18px;letter-spacing:-0.535px;">WSUS Clients</span>
<div style="left:87.5px;top:468.1px;line-height:0"><svg width="7" height="10" viewBox="0 0 7 10"><path d="M1 1.200L4.600 5 1 8.800" fill="none" stroke="#a6a6a6" stroke-width="1.900"/></svg></div>
<div style="left:102px;top:464px;line-height:0"><svg width="16" height="16" viewBox="0 0 16 16"><g transform="translate(0 0)">
<defs><linearGradient id="fd" x1="0" y1="0" x2="0" y2="1"><stop offset="0" stop-color="#f9e6a6"/><stop offset="1" stop-color="#eecb68"/></linearGradient></defs>
<path d="M1.300 3.500C1.300 2.800 1.800 2.400 2.400 2.400H7.300L8.100 1.300H14.100C14.600 1.300 14.800 1.600 14.800 2.100V13.700H1.300Z" fill="url(#fd)" stroke="#dcb14e" stroke-width=".7"/>
<path d="M1.300 13.400H14.800" stroke="#c99a2e" stroke-width=".8"/>
<rect x="9.300" y="2" width="2.300" height="1" fill="#fffdf2"/><rect x="11.600" y="2" width="2.100" height="1" fill="#3f86e8"/>
</g>
<rect x="4.100" y="6.100" width="4.800" height="5.900" fill="#b27f12"/>
<rect x="4.900" y="7.200" width="3.200" height="3.200" fill="#efd894"/>
<rect x="5.700" y="7.800" width="1.700" height="1.800" fill="#fff8dc"/>
<rect x="4.100" y="10.800" width="4.800" height="1.200" fill="#a87408"/>
</svg></div>
<span style="left:123.60px;top:463.14px;font-size:12px;line-height:18px;letter-spacing:-0.761px;">User</span>
<div style="left:87.5px;top:486.1px;line-height:0"><svg width="7" height="10" viewBox="0 0 7 10"><path d="M1 1.200L4.600 5 1 8.800" fill="none" stroke="#a6a6a6" stroke-width="1.900"/></svg></div>
<div style="left:102px;top:482px;line-height:0"><svg width="16" height="16" viewBox="0 0 16 16"><g transform="translate(0 0)">
<defs><linearGradient id="fd" x1="0" y1="0" x2="0" y2="1"><stop offset="0" stop-color="#f9e6a6"/><stop offset="1" stop-color="#eecb68"/></linearGradient></defs>
<path d="M1.300 3.500C1.300 2.800 1.800 2.400 2.400 2.400H7.300L8.100 1.300H14.100C14.600 1.300 14.800 1.600 14.800 2.100V13.700H1.300Z" fill="url(#fd)" stroke="#dcb14e" stroke-width=".7"/>
<path d="M1.300 13.400H14.800" stroke="#c99a2e" stroke-width=".8"/>
<rect x="9.300" y="2" width="2.300" height="1" fill="#fffdf2"/><rect x="11.600" y="2" width="2.100" height="1" fill="#3f86e8"/>
</g>
<rect x="4.100" y="6.100" width="4.800" height="5.900" fill="#b27f12"/>
<rect x="4.900" y="7.200" width="3.200" height="3.200" fill="#efd894"/>
<rect x="5.700" y="7.800" width="1.700" height="1.800" fill="#fff8dc"/>
<rect x="4.100" y="10.800" width="4.800" height="1.200" fill="#a87408"/>
</svg></div>
<span style="left:123.60px;top:481.14px;font-size:12px;line-height:18px;letter-spacing:-0.070px;">Workstations</span>
<div style="left:68.5px;top:504.1px;line-height:0"><svg width="7" height="10" viewBox="0 0 7 10"><path d="M1 1.200L4.600 5 1 8.800" fill="none" stroke="#a6a6a6" stroke-width="1.900"/></svg></div>
<div style="left:83px;top:500px;line-height:0"><svg width="16" height="16" viewBox="0 0 16 16"><g transform="translate(0 0)">
<defs><linearGradient id="fd" x1="0" y1="0" x2="0" y2="1"><stop offset="0" stop-color="#f9e6a6"/><stop offset="1" stop-color="#eecb68"/></linearGradient></defs>
<path d="M1.300 3.500C1.300 2.800 1.800 2.400 2.400 2.400H7.300L8.100 1.300H14.100C14.600 1.300 14.800 1.600 14.800 2.100V13.700H1.300Z" fill="url(#fd)" stroke="#dcb14e" stroke-width=".7"/>
<path d="M1.300 13.400H14.800" stroke="#c99a2e" stroke-width=".8"/>
<rect x="9.300" y="2" width="2.300" height="1" fill="#fffdf2"/><rect x="11.600" y="2" width="2.100" height="1" fill="#3f86e8"/>
</g>
<rect x="4.100" y="6.100" width="4.800" height="5.900" fill="#b27f12"/>
<rect x="4.900" y="7.200" width="3.200" height="3.200" fill="#efd894"/>
<rect x="5.700" y="7.800" width="1.700" height="1.800" fill="#fff8dc"/>
<rect x="4.100" y="10.800" width="4.800" height="1.200" fill="#a87408"/>
</svg></div>
<span style="left:104.60px;top:499.14px;font-size:12px;line-height:18px;letter-spacing:-0.172px;">Microsoft Exchange Security Groups</span>
<div style="left:68.5px;top:522.1px;line-height:0"><svg width="7" height="10" viewBox="0 0 7 10"><path d="M1 1.200L4.600 5 1 8.800" fill="none" stroke="#a6a6a6" stroke-width="1.900"/></svg></div>
<div style="left:83px;top:518px;line-height:0"><svg width="16" height="16" viewBox="0 0 16 16">
<defs><linearGradient id="fe" x1="0" y1="0" x2="0" y2="1"><stop offset="0" stop-color="#f9e6a6"/><stop offset="1" stop-color="#eecb68"/></linearGradient></defs>
<path d="M.5 3.200C.5 2.500 1 2.200 1.600 2.200H6.600L7.400 1.200H13.200C13.700 1.200 13.900 1.500 13.900 2V13.800H.5Z" fill="url(#fe)" stroke="#dcb85a" stroke-width=".7"/>
<rect x="8.600" y="1.900" width="2.200" height="1" fill="#fffdf0"/><rect x="10.800" y="1.900" width="2" height="1" fill="#3f86e8"/>

<path d="M6.800 5.500H14C14.700 5.500 15.300 5.100 15.700 5 15.600 5.900 15 6.600 14.500 6.700V12.800H7.200V6.700C7.200 6.100 7 5.700 6.800 5.500Z" fill="#fbf6e2" stroke="#8a8678" stroke-width=".7"/>
<path d="M8.600 7.800H12.800M8.600 9.400H12.800M8.600 11H11.600" stroke="#6f6f7c" stroke-width=".8"/>
<path d="M5.400 12.800H11.400V15H5.900C5.200 15 4.900 14.500 4.900 13.900S5.200 12.800 5.400 12.800Z" fill="#f7efd0" stroke="#8a8678" stroke-width=".7"/>
</svg></div>
<span style="left:104.60px;top:517.14px;font-size:12px;line-height:18px;letter-spacing:0.048px;">Gruppenrichtlinienobjekte</span>
<div style="left:68.5px;top:540.1px;line-height:0"><svg width="7" height="10" viewBox="0 0 7 10"><path d="M1 1.200L4.600 5 1 8.800" fill="none" stroke="#a6a6a6" stroke-width="1.900"/></svg></div>
<div style="left:83px;top:536px;line-height:0"><svg width="16" height="16" viewBox="0 0 16 16">
<defs><linearGradient id="fe" x1="0" y1="0" x2="0" y2="1"><stop offset="0" stop-color="#f9e6a6"/><stop offset="1" stop-color="#eecb68"/></linearGradient></defs>
<path d="M.5 3.200C.5 2.500 1 2.200 1.600 2.200H6.600L7.400 1.200H13.200C13.700 1.200 13.900 1.500 13.900 2V13.800H.5Z" fill="url(#fe)" stroke="#dcb85a" stroke-width=".7"/>
<rect x="8.600" y="1.900" width="2.200" height="1" fill="#fffdf0"/><rect x="10.800" y="1.900" width="2" height="1" fill="#3f86e8"/>

<rect x="8.200" y="4.800" width="6.200" height="3.600" fill="#fdfdfd" stroke="#b0b0b0" stroke-width=".6"/>
<path d="M9.200 6H13.400M9.200 7.300H13.400" stroke="#8a8a8a" stroke-width=".7"/>
<path d="M6.800 8.900H15.800L12.300 12.500V15.600L10.300 14.500V12.500Z" fill="#8796a3" stroke="#55636e" stroke-width=".7" stroke-linejoin="round"/>
<path d="M8 9.500H14.600" stroke="#d3dce3" stroke-width=".9"/>
</svg></div>
<span style="left:104.60px;top:535.14px;font-size:12px;line-height:18px;">WMI-Filter</span>
<div style="left:68.5px;top:558.1px;line-height:0"><svg width="7" height="10" viewBox="0 0 7 10"><path d="M1 1.200L4.600 5 1 8.800" fill="none" stroke="#a6a6a6" stroke-width="1.900"/></svg></div>
<div style="left:83px;top:554px;line-height:0"><svg width="16" height="16" viewBox="0 0 16 16">
<defs><linearGradient id="fe" x1="0" y1="0" x2="0" y2="1"><stop offset="0" stop-color="#f9e6a6"/><stop offset="1" stop-color="#eecb68"/></linearGradient></defs>
<path d="M.5 3.200C.5 2.500 1 2.200 1.600 2.200H6.600L7.400 1.200H13.200C13.700 1.200 13.900 1.500 13.900 2V13.800H.5Z" fill="url(#fe)" stroke="#dcb85a" stroke-width=".7"/>
<rect x="8.600" y="1.900" width="2.200" height="1" fill="#fffdf0"/><rect x="10.800" y="1.900" width="2" height="1" fill="#3f86e8"/>

<rect x="6.800" y="4.200" width="8.700" height="11.200" fill="#e4e9f0" stroke="#5f6f86" stroke-width=".8"/>
<rect x="6.800" y="3.800" width="8.700" height="1.100" fill="#c43c3c"/>
<rect x="8.700" y="6.600" width="5" height="6.800" fill="#4173d6" stroke="#27488f" stroke-width=".6"/>
<path d="M9.700 8.200H12.700M9.700 9.900H12.700M9.700 11.600H12.700" stroke="#f1f5ff" stroke-width=".8"/>
<path d="M5.400 15.600H12" stroke="#8a8f98" stroke-width=".8"/>
</svg></div>
<span style="left:104.60px;top:553.14px;font-size:12px;line-height:18px;">Starter-Gruppenrichtlinienobjekte</span>
<div style="left:30.5px;top:576.1px;line-height:0"><svg width="7" height="10" viewBox="0 0 7 10"><path d="M1 1.200L4.600 5 1 8.800" fill="none" stroke="#a6a6a6" stroke-width="1.900"/></svg></div>
<div style="left:45px;top:572px;line-height:0"><svg width="16" height="16" viewBox="0 0 16 16">
<defs><linearGradient id="fe" x1="0" y1="0" x2="0" y2="1"><stop offset="0" stop-color="#f9e6a6"/><stop offset="1" stop-color="#eecb68"/></linearGradient></defs>
<path d="M.5 3.200C.5 2.500 1 2.200 1.600 2.200H6.600L7.400 1.200H13.200C13.700 1.200 13.900 1.500 13.900 2V13.800H.5Z" fill="url(#fe)" stroke="#dcb85a" stroke-width=".7"/>
<rect x="8.600" y="1.900" width="2.200" height="1" fill="#fffdf0"/><rect x="10.800" y="1.900" width="2" height="1" fill="#3f86e8"/>

<rect x="7.800" y="5.200" width="7.900" height="10.400" fill="#2f74e6" stroke="#1f52b6" stroke-width=".6"/>
<path d="M8.800 6.600H11.200V8.600H8.800ZM12.400 6.600H14.800V8.600H12.400ZM8.800 10H11.200V12H8.800ZM12.400 10H14.800V12H12.400Z" fill="#c6e4ff"/>
<rect x="10.600" y="13.200" width="2.400" height="2.400" fill="#123a8f"/>
</svg></div>
<span style="left:66.60px;top:571.14px;font-size:12px;line-height:18px;letter-spacing:-0.161px;">Standorte</span>
<div style="left:45px;top:590px;line-height:0"><svg width="16" height="16" viewBox="0 0 16 16">
<path d="M1.800 2.600H6.600L7.400 1.400H11V8H1.800Z" fill="#f1d27a" stroke="#d8b75c" stroke-width=".7"/>
<rect x="8.600" y="1" width="6.800" height="5.400" fill="#d9dde2" stroke="#6d7882" stroke-width=".7"/>
<rect x="9.600" y="2" width="4.800" height="3.200" fill="#2a50c8"/>
<rect x="4.600" y="5.800" width="8.400" height="6.400" fill="#d9dde2" stroke="#6d7882" stroke-width=".7"/>
<rect x="5.600" y="6.800" width="6.400" height="4.200" fill="#2346c0"/>
<path d="M7.200 7.800L9.600 9 7.800 10.400Z" fill="#fff"/>
<rect x="7.400" y="12.400" width="2.800" height="1.400" fill="#8a949c"/>
<rect x="5.800" y="13.800" width="6" height="1" fill="#a9b2b9"/>
<rect x=".6" y="7.200" width="2.600" height="7.800" fill="#cfd5da" stroke="#6d7882" stroke-width=".6"/>
<rect x="1.200" y="9" width="1.400" height="1.600" fill="#4be022"/>
<path d="M12.600 6.600L15.200 5.400 14.200 8Z" fill="#fff" stroke="#444" stroke-width=".4"/>
</svg></div>
<span style="left:66.60px;top:589.14px;font-size:12px;line-height:18px;letter-spacing:0.106px;">Gruppenrichtlinienmodellierung</span>
<div style="left:45px;top:608px;line-height:0"><svg width="16" height="16" viewBox="0 0 16 16">
<defs><linearGradient id="fe" x1="0" y1="0" x2="0" y2="1"><stop offset="0" stop-color="#f9e6a6"/><stop offset="1" stop-color="#eecb68"/></linearGradient></defs>
<path d="M.5 3.200C.5 2.500 1 2.200 1.600 2.200H6.600L7.400 1.200H13.200C13.700 1.200 13.900 1.500 13.900 2V13.800H.5Z" fill="url(#fe)" stroke="#dcb85a" stroke-width=".7"/>
<rect x="8.600" y="1.900" width="2.200" height="1" fill="#fffdf0"/><rect x="10.800" y="1.900" width="2" height="1" fill="#3f86e8"/>

<path d="M7.600 6H13.200L15.400 8.200V15.600H7.600Z" fill="#fdfdfd" stroke="#8d8d8d" stroke-width=".7"/>
<path d="M13.200 6V8.200H15.400" fill="#e6e6e6" stroke="#8d8d8d" stroke-width=".6"/>
<path d="M8.800 10.600L10 11.800 12 9.400" fill="none" stroke="#2a50c8" stroke-width="1"/>
<path d="M9 13.600H14" stroke="#8a8a8a" stroke-width=".8"/>
<path d="M11.800 11.600H14" stroke="#8a8a8a" stroke-width=".8"/>
</svg></div>
<span style="left:66.60px;top:607.14px;font-size:12px;line-height:18px;letter-spacing:-0.050px;">Gruppenrichtlinienergebnisse</span>
<div style="left:428px;top:83px;width:956px;height:670px;background:#f0f0f0;border-top:1px solid #a0a0a0;border-left:1px solid #a0a0a0;border-bottom:1px solid #fff;box-sizing:border-box;"></div>
<div style="left:429px;top:84px;width:955px;height:668px;border-top:1px solid #696969;border-left:1px solid #696969;border-bottom:1px solid #ebebeb;box-sizing:border-box;"></div>
<span style="left:433.00px;top:87.32px;font-size:13.5px;line-height:18px;font-weight:700;letter-spacing:0.577px;">AD CS Server Hardening</span>
<div style="left:435px;top:109px;width:48px;height:19px;background:#f0f0f0;border:1px solid #d9d9d9;box-sizing:border-box;"></div>
<div style="left:482px;top:109px;width:44px;height:19px;background:#f0f0f0;border:1px solid #d9d9d9;box-sizing:border-box;"></div>
<div style="left:603px;top:109px;width:66px;height:19px;background:#f0f0f0;border:1px solid #d9d9d9;box-sizing:border-box;"></div>
<div style="left:433px;top:127px;width:946px;height:620px;background:#ffffff;border:1px solid #dcdcdc;box-sizing:border-box;"></div>
<div style="left:525px;top:107px;width:79px;height:21px;background:#ffffff;border:1px solid #d9d9d9;border-bottom:none;box-sizing:border-box;"></div>
<span style="left:441.20px;top:109.54px;font-size:12.3px;line-height:18px;transform:scaleX(0.8345);transform-origin:0 0;">Bereich</span>
<span style="left:489.40px;top:109.54px;font-size:12.3px;line-height:18px;transform:scaleX(0.8219);transform-origin:0 0;">Details</span>
<span style="left:533.00px;top:107.54px;font-size:12.3px;line-height:18px;transform:scaleX(0.8396);transform-origin:0 0;">Einstellungen</span>
<span style="left:608.70px;top:109.54px;font-size:12.3px;line-height:18px;transform:scaleX(0.8339);transform-origin:0 0;">Delegierung</span>
<div style="left:442px;top:134px;width:929px;height:604px;background:#ffffff;border-top:2px solid #696969;border-left:2px solid #696969;border-bottom:1px solid #e3e3e3;border-right:1px solid #e3e3e3;box-sizing:border-box;"></div>
<div style="left:1353px;top:136px;width:17px;height:601px;background:#f0f0f0;"></div>
<div style="left:1354px;top:405px;width:15px;height:298px;background:#cdcdcd;"></div>
<div style="left:1356px;top:152px;line-height:0"><svg width="11" height="11" viewBox="0 0 11 11"><path d="M5.500 .9L11 6.200V10.200L5.500 5 0 10.200V6.200Z" fill="#606060"/></svg></div>
<div style="left:1356px;top:711px;line-height:0"><svg width="11" height="11" viewBox="0 0 11 11"><path d="M0 0V4L5.500 9.300 11 4V0L5.500 5.200Z" fill="#606060"/></svg></div>
<div style="left:444px;top:136px;width:909px;height:601px;overflow:hidden;"><div style="left:-444px;top:-136px;width:1384px;height:776px;">
<div style="left:452px;top:100px;width:893px;height:628px;border:1px solid #666;box-sizing:border-box;"></div>
<div style="left:508px;top:100px;width:836px;height:81px;background:#f9f9f9;border:1px solid #bbb;box-sizing:border-box;"></div>
<span style="left:533.10px;top:134.12px;font-size:11.5px;line-height:16px;letter-spacing:1px;text-shadow:1px 0 0 currentColor,.5px 0 0 currentColor;transform:scaleX(0.9023);transform-origin:0 0;">Name</span>
<div style="left:532px;top:151px;width:809px;height:1px;background:#ccc;"></div>
<span style="left:533.50px;top:154.52px;font-size:11.5px;line-height:16px;transform:scaleX(0.9489);transform-origin:0 0;">DWP\SRVSUBCA$</span>
<div style="left:473px;top:186px;width:871px;height:31px;background:#a0bacb;border:1px solid #bbb;box-sizing:border-box;"></div>
<span style="left:482.10px;top:190.02px;font-size:11.5px;line-height:16px;letter-spacing:1px;text-shadow:1px 0 0 currentColor,.5px 0 0 currentColor;transform:scaleX(0.9204);transform-origin:0 0;">Delegierung</span>
<span style="left:1277.00px;top:203.12px;font-size:11.5px;line-height:16px;transform:scaleX(0.9053);transform-origin:0 0;">Ausblenden</span>
<div style="left:508px;top:216px;width:836px;height:24px;background:#f9f9f9;border:1px solid #bbb;box-sizing:border-box;"></div>
<span style="left:529.80px;top:219.52px;font-size:11.5px;line-height:16px;letter-spacing:1px;text-shadow:1px 0 0 currentColor,.5px 0 0 currentColor;transform:scaleX(0.9333);transform-origin:0 0;">Folgende Gruppen und Benutzer haben die angegebene Berechtigung für das Gruppenrichtlinienobjekt</span>
<div style="left:508px;top:239px;width:836px;height:159px;background:#f9f9f9;border:1px solid #bbb;box-sizing:border-box;"></div>
<span style="left:533.10px;top:247.52px;font-size:11.5px;line-height:16px;letter-spacing:1px;text-shadow:1px 0 0 currentColor,.5px 0 0 currentColor;transform:scaleX(0.9023);transform-origin:0 0;">Name</span>
<span style="left:802.60px;top:247.52px;font-size:11.5px;line-height:16px;letter-spacing:1px;text-shadow:1px 0 0 currentColor,.5px 0 0 currentColor;transform:scaleX(0.9364);transform-origin:0 0;">Zulässige Berechtigungen</span>
<span style="left:1073.60px;top:247.52px;font-size:11.5px;line-height:16px;letter-spacing:1px;text-shadow:1px 0 0 currentColor,.5px 0 0 currentColor;transform:scaleX(0.9035);transform-origin:0 0;">Geerbt</span>
<div style="left:532px;top:265px;width:268px;height:1px;background:#ccc;"></div>
<div style="left:802px;top:265px;width:269px;height:1px;background:#ccc;"></div>
<div style="left:1073px;top:265px;width:268px;height:1px;background:#ccc;"></div>
<span style="left:533.00px;top:270.12px;font-size:11.5px;line-height:16px;transform:scaleX(0.9289);transform-origin:0 0;">DWP\Domänen-Admins</span>
<span style="left:803.00px;top:270.12px;font-size:11.5px;line-height:16px;transform:scaleX(0.9188);transform-origin:0 0;">Einstellungen bearbeiten, löschen, Sicherheit ändern</span>
<span style="left:1074.00px;top:270.12px;font-size:11.5px;line-height:16px;transform:scaleX(0.8877);transform-origin:0 0;">Nein</span>
<span style="left:533.00px;top:292.12px;font-size:11.5px;line-height:16px;transform:scaleX(0.9179);transform-origin:0 0;">DWP\Organisations-Admins</span>
<span style="left:803.00px;top:292.12px;font-size:11.5px;line-height:16px;transform:scaleX(0.9188);transform-origin:0 0;">Einstellungen bearbeiten, löschen, Sicherheit ändern</span>
<span style="left:1074.00px;top:292.12px;font-size:11.5px;line-height:16px;transform:scaleX(0.8877);transform-origin:0 0;">Nein</span>
<span style="left:533.00px;top:313.12px;font-size:11.5px;line-height:16px;transform:scaleX(0.9489);transform-origin:0 0;">DWP\SRVSUBCA$</span>
<span style="left:803.00px;top:313.12px;font-size:11.5px;line-height:16px;transform:scaleX(0.9130);transform-origin:0 0;">Lesen (durch Sicherheitsfilterung)</span>
<span style="left:1074.00px;top:313.12px;font-size:11.5px;line-height:16px;transform:scaleX(0.8877);transform-origin:0 0;">Nein</span>
<span style="left:533.00px;top:335.12px;font-size:11.5px;line-height:16px;transform:scaleX(0.9478);transform-origin:0 0;">NT-AUTORITÄT\DOMÄNENCONTROLLER DER</span>
<span style="left:803.00px;top:335.12px;font-size:11.5px;line-height:16px;transform:scaleX(0.9061);transform-origin:0 0;">Lesen</span>
<span style="left:1074.00px;top:335.12px;font-size:11.5px;line-height:16px;transform:scaleX(0.8877);transform-origin:0 0;">Nein</span>
<span style="left:533.00px;top:373.12px;font-size:11.5px;line-height:16px;transform:scaleX(0.9577);transform-origin:0 0;">NT-AUTORITÄT\SYSTEM</span>
<span style="left:803.00px;top:373.12px;font-size:11.5px;line-height:16px;transform:scaleX(0.9188);transform-origin:0 0;">Einstellungen bearbeiten, löschen, Sicherheit ändern</span>
<span style="left:1074.00px;top:373.12px;font-size:11.5px;line-height:16px;transform:scaleX(0.8877);transform-origin:0 0;">Nein</span>
<span style="left:533.00px;top:352.12px;font-size:11.5px;line-height:16px;transform:scaleX(0.9333);transform-origin:0 0;">ORGANISATION</span>
<div style="left:453px;top:400px;width:891px;height:31px;background:#fef7d6;border:1px solid #bbb;box-sizing:border-box;"></div>
<span style="left:461.60px;top:403.52px;font-size:11.5px;line-height:16px;letter-spacing:1px;text-shadow:1px 0 0 currentColor,.5px 0 0 currentColor;color:#3333cc;transform:scaleX(0.9264);transform-origin:0 0;">Computerkonfiguration (Aktiviert)</span>
<span style="left:1277.00px;top:417.12px;font-size:11.5px;line-height:16px;transform:scaleX(0.9053);transform-origin:0 0;">Ausblenden</span>
<div style="left:463px;top:430px;width:881px;height:30px;background:#7096b2;border:1px solid #bbb;box-sizing:border-box;"></div>
<span style="left:472.10px;top:433.52px;font-size:11.5px;line-height:16px;letter-spacing:1px;text-shadow:1px 0 0 currentColor,.5px 0 0 currentColor;transform:scaleX(0.9210);transform-origin:0 0;">Richtlinien</span>
<span style="left:1277.00px;top:447.12px;font-size:11.5px;line-height:16px;transform:scaleX(0.9053);transform-origin:0 0;">Ausblenden</span>
<div style="left:473px;top:459px;width:871px;height:30px;background:#a0bacb;border:1px solid #bbb;box-sizing:border-box;"></div>
<span style="left:482.10px;top:462.72px;font-size:11.5px;line-height:16px;letter-spacing:1px;text-shadow:1px 0 0 currentColor,.5px 0 0 currentColor;transform:scaleX(0.9264);transform-origin:0 0;">Windows-Einstellungen</span>
<span style="left:1277.00px;top:476.12px;font-size:11.5px;line-height:16px;transform:scaleX(0.9053);transform-origin:0 0;">Ausblenden</span>
<div style="left:483px;top:489px;width:861px;height:30px;background:#c0d2de;border:1px solid #bbb;box-sizing:border-box;"></div>
<span style="left:492.10px;top:492.52px;font-size:11.5px;line-height:16px;letter-spacing:1px;text-shadow:1px 0 0 currentColor,.5px 0 0 currentColor;transform:scaleX(0.9228);transform-origin:0 0;">Sicherheitseinstellungen</span>
<span style="left:1277.00px;top:506.12px;font-size:11.5px;line-height:16px;transform:scaleX(0.9053);transform-origin:0 0;">Ausblenden</span>
<div style="left:493px;top:518px;width:851px;height:30px;background:#d9e3ea;border:1px solid #bbb;box-sizing:border-box;"></div>
<span style="left:505.00px;top:522.12px;font-size:11.5px;line-height:16px;letter-spacing:1px;text-shadow:1px 0 0 currentColor,.5px 0 0 currentColor;transform:scaleX(0.9426);transform-origin:0 0;">Lokale Richtlinien/Sicherheitsoptionen</span>
<span style="left:1277.00px;top:535.12px;font-size:11.5px;line-height:16px;transform:scaleX(0.9053);transform-origin:0 0;">Ausblenden</span>
<div style="left:508px;top:548px;width:836px;height:30px;background:#e8e8e8;border:1px solid #bbb;box-sizing:border-box;"></div>
<span style="left:519.60px;top:550.82px;font-size:11.5px;line-height:16px;letter-spacing:1px;text-shadow:1px 0 0 currentColor,.5px 0 0 currentColor;transform:scaleX(0.9143);transform-origin:0 0;">Andere</span>
<span style="left:1277.00px;top:565.12px;font-size:11.5px;line-height:16px;transform:scaleX(0.9053);transform-origin:0 0;">Ausblenden</span>
<div style="left:508px;top:577px;width:836px;height:96px;background:#f9f9f9;border:1px solid #bbb;box-sizing:border-box;"></div>
<span style="left:533.10px;top:585.92px;font-size:11.5px;line-height:16px;letter-spacing:1px;text-shadow:1px 0 0 currentColor,.5px 0 0 currentColor;transform:scaleX(0.9176);transform-origin:0 0;">Richtlinie</span>
<span style="left:938.80px;top:585.92px;font-size:11.5px;line-height:16px;letter-spacing:1px;text-shadow:1px 0 0 currentColor,.5px 0 0 currentColor;transform:scaleX(0.9187);transform-origin:0 0;">Einstellung</span>
<div style="left:532px;top:604px;width:404px;height:1px;background:#ccc;"></div>
<div style="left:938px;top:604px;width:403px;height:1px;background:#ccc;"></div>
<span style="left:533.00px;top:608.72px;font-size:11.5px;line-height:16px;transform:scaleX(0.9363);transform-origin:0 0;">Netzwerksicherheit: Beschränken von NTLM: Eingehenden NTLM-Datenverkehr</span>
<span style="left:533.00px;top:626.12px;font-size:11.5px;line-height:16px;transform:scaleX(0.9305);transform-origin:0 0;">überwachen</span>
<span style="left:939.20px;top:608.72px;font-size:11.5px;line-height:16px;transform:scaleX(0.9266);transform-origin:0 0;">Überwachung für alle Konten aktivieren</span>
<span style="left:533.00px;top:648.12px;font-size:11.5px;line-height:16px;transform:scaleX(0.9353);transform-origin:0 0;">Netzwerksicherheit: Beschränken von NTLM: Eingehender NTLM-Datenverkehr</span>
<span style="left:939.20px;top:648.12px;font-size:11.5px;line-height:16px;transform:scaleX(0.9193);transform-origin:0 0;">Alle Domänenkonten verweigern</span>
<div style="left:453px;top:675px;width:891px;height:30px;background:#fef7d6;border:1px solid #bbb;box-sizing:border-box;"></div>
<span style="left:462.60px;top:678.52px;font-size:11.5px;line-height:16px;letter-spacing:1px;text-shadow:1px 0 0 currentColor,.5px 0 0 currentColor;color:#3333cc;transform:scaleX(0.9286);transform-origin:0 0;">Benutzerkonfiguration (Aktiviert)</span>
<span style="left:1277.00px;top:691.12px;font-size:11.5px;line-height:16px;transform:scaleX(0.9053);transform-origin:0 0;">Ausblenden</span>
<div style="left:508px;top:704px;width:836px;height:24px;background:#f9f9f9;border:1px solid #bbb;box-sizing:border-box;"></div>
<span style="left:530.20px;top:707.52px;font-size:11.5px;line-height:16px;transform:scaleX(0.9034);transform-origin:0 0;">Keine Einstellungen definiert</span>
</div></div>
<div style="left:426px;top:753px;width:958px;height:1px;background:#d7d7d7;"></div>
<div style="left:1165px;top:755px;width:1px;height:20px;background:#d0d0d0;"></div>
<div style="left:1298px;top:755px;width:1px;height:20px;background:#d0d0d0;"></div>
<div style="left:1383px;top:755px;width:1px;height:20px;background:#d0d0d0;"></div>
</body></html>
